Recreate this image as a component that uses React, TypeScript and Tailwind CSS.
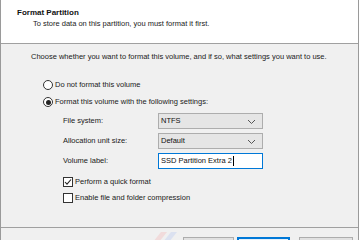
import React from 'react';

const Chevron = () => (
  <svg width="9" height="6" viewBox="0 0 9 6" className="absolute right-[6px] top-[5px]">
    <path d="M1 1 L4.5 4.5 L8 1" fill="none" stroke="#555" strokeWidth="1" />
  </svg>
);

const Select = ({ value }: { value: string }) => (
  <div className="relative w-[105px] h-[16px] bg-[#e5e5e5] border border-[#adadad] pl-[2px] text-[7.5px] leading-[14px] text-[#111]">
    {value}
    <Chevron />
  </div>
);

const Radio = ({ checked, label }: { checked?: boolean; label: string }) => (
  <div className="flex items-center h-[12px]">
    <div className="w-[10px] h-[10px] rounded-full border border-[#333] bg-white flex items-center justify-center">
      {checked && <div className="w-[5px] h-[5px] rounded-full bg-[#222]" />}
    </div>
    <span className="ml-[2px]">{label}</span>
  </div>
);

const Checkbox = ({ checked, label }: { checked?: boolean; label: string }) => (
  <div className="flex items-center h-[12px]">
    <div className="w-[10px] h-[10px] border border-[#333] bg-white flex items-center justify-center">
      {checked && (
        <svg width="8" height="8" viewBox="0 0 8 8">
          <path d="M1 4 L3 6.2 L7 1.5" fill="none" stroke="#222" strokeWidth="1.1" />
        </svg>
      )}
    </div>
    <span className="ml-[2px]">{label}</span>
  </div>
);

export default function App() {
  return (
    <div
      className="w-[360px] h-[240px] overflow-hidden bg-white"
      style={{ fontFamily: '"Liberation Sans", Arial, sans-serif' }}
    >
      <div className="w-[359px] h-[240px] flex flex-col border-l border-r border-[#9a9a9a] text-[7.5px] text-[#1a1a1a]">
        {/* header */}
        <div className="h-[44px] bg-white border-b border-[#a0a0a0] pl-[16px] pt-[8px]">
          <div className="font-bold text-[8px] leading-[10px] text-[#111]">Format Partition</div>
          <div className="pl-[16px] mt-[1px] leading-[10px]">
            To store data on this partition, you must format it first.
          </div>
        </div>

        {/* body */}
        <div className="h-[184px] bg-[#f0f0f0] border-b border-[#a0a0a0] pl-[30px] pt-[8px]">
          <div className="leading-[10px]">
            Choose whether you want to format this volume, and if so, what settings you want to use.
          </div>
          <div className="ml-[12px] mt-[17px] flex flex-col gap-[5px]">
            <Radio label="Do not format this volume" />
            <Radio checked label="Format this volume with the following settings:" />
          </div>
          <div className="ml-[32px] mt-[5px] grid grid-cols-[95px_105px] gap-y-[4px] items-center">
            <span>File system:</span>
            <Select value="NTFS" />
            <span>Allocation unit size:</span>
            <Select value="Default" />
            <span>Volume label:</span>
            <div className="w-[105px] h-[16px] bg-white border border-[#0078d7] pl-[2px] text-[7.5px] leading-[14px] text-[#111] flex items-center">
              SSD Partition Extra 2<span className="w-px h-[10px] bg-black ml-[1px]" />
            </div>
          </div>
          <div className="ml-[32px] mt-[7px] flex flex-col gap-[4px]">
            <Checkbox checked label="Perform a quick format" />
            <Checkbox label="Enable file and folder compression" />
          </div>
        </div>

        {/* footer */}
        <div className="flex-1 bg-[#f0f0f0] relative">
          <svg width="24" height="10" viewBox="0 0 24 10" className="absolute left-[152px] top-[4px] opacity-25">
            <path d="M0 10 L8 0 L14 0 L6 10 Z" fill="#f4a0a0" />
            <path d="M10 10 L18 0 L24 0 L16 10 Z" fill="#a0b8f0" />
          </svg>
          <div className="absolute left-[182px] top-[9px] flex">
            <div className="w-[51px] h-[22px] bg-[#e1e1e1] border border-[#adadad]" />
            <div className="ml-[3px] w-[53px] h-[22px] bg-[#e5f1fb] border-2 border-[#0078d7]" />
            <div className="ml-[9px] w-[54px] h-[22px] bg-[#e1e1e1] border border-[#adadad]" />
          </div>
        </div>
      </div>
    </div>
  );
}
